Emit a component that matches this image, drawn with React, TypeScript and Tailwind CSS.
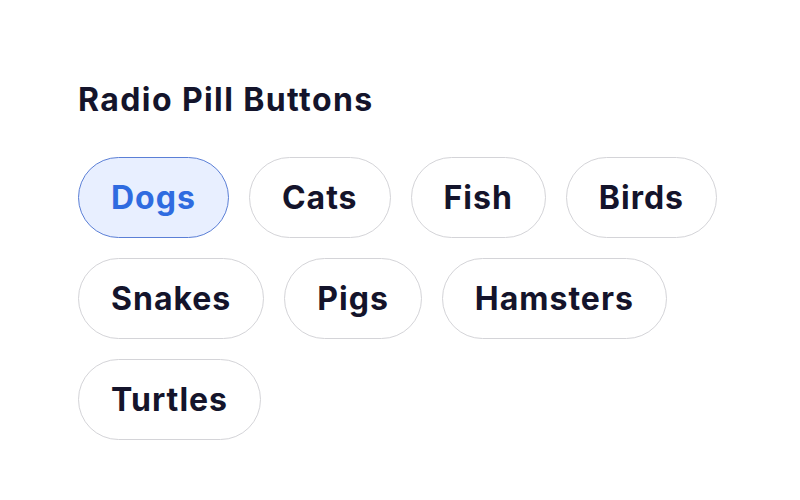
import { useState } from 'react';

const animals = ['Dogs', 'Cats', 'Fish', 'Birds', 'Snakes', 'Pigs', 'Hamsters', 'Turtles'];

export default function App() {
  const [selected, setSelected] = useState('Dogs');

  return (
    <div className="bg-white min-h-screen font-['Inter',sans-serif] text-[#14142b]">
      <div className="pl-[78px] pt-[79px] w-[740px]">
        <h2 className="text-[32px] leading-[42px] font-bold tracking-[1.4px] mb-[36px]">Radio Pill Buttons</h2>
        <div className="flex flex-wrap gap-x-[20px] gap-y-[20px]" role="radiogroup">
          {animals.map((a) => {
            const on = a === selected;
            return (
              <button
                key={a}
                role="radio"
                aria-checked={on}
                onClick={() => setSelected(a)}
                className={
                  'h-[81px] px-[32px] flex items-center rounded-full border text-[32px] font-bold tracking-[1px] ' +
                  (on
                    ? 'bg-[#e8efff] border-[#5b7fd6] text-[#2f6be0]'
                    : 'bg-white border-[#d4d4d8] text-[#14142b]')
                }
              >
                {a}
              </button>
            );
          })}
        </div>
      </div>
    </div>
  );
}
